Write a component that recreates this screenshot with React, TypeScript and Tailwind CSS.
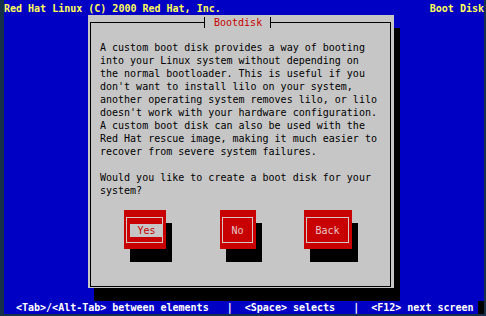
import React from "react";

const lines = [
  "A custom boot disk provides a way of booting",
  "into your Linux system without depending on",
  "the normal bootloader. This is useful if you",
  "don't want to install lilo on your system,",
  "another operating system removes lilo, or lilo",
  "doesn't work with your hardware configuration.",
  "A custom boot disk can also be used with the",
  "Red Hat rescue image, making it much easier to",
  "recover from severe system failures.",
  "",
  "Would you like to create a boot disk for your",
  "system?",
];

const Button = ({
  label,
  className,
  focused,
}: {
  label: string;
  className: string;
  focused?: boolean;
}) => {
  return (
    <div
      className={`h-[39px] bg-[#c80000] shadow-[6px_13px_0_0_#000] pt-[7px] pr-[3px] pb-[6px] pl-[2px] ${className}`}
    >
      <div className="h-full border border-[#d6c6c6] flex items-center justify-center">
        {focused ? (
          <div className="h-[13px] w-full ml-[3px] -mr-px bg-[#c6c6c6] text-[#c80000] text-center">
            {label}
          </div>
        ) : (
          <span className="text-[#e6c8c8]">{label}</span>
        )}
      </div>
    </div>
  );
};

const Dialog = () => {
  return (
    <div className="w-[306px] h-[273px] bg-[#c6c6c6] shadow-[6px_13px_0_0_#000] pt-[7px] pr-[3px] pb-[1px] pl-[2px]">
      <div className="relative h-full border border-black pl-[9px] pt-[18px]">
        <div className="absolute -top-[7px] left-[113px] h-[13px] flex items-center bg-[#c6c6c6]">
          <span className="w-px h-[11px] bg-black" />
          <span className="pl-[9px] pr-[8px] text-[#c80000]">Bootdisk</span>
          <span className="w-px h-[11px] bg-black" />
        </div>
        <div className="text-black whitespace-pre">
          {lines.map((l, i) => (
            <div key={i} className="h-[13px]">
              {l}
            </div>
          ))}
        </div>
        <div className="flex mt-[13px] pl-[24px]">
          <Button label="Yes" className="w-[42px]" focused />
          <Button label="No" className="w-[36px] ml-[54px]" />
          <Button label="Back" className="w-[48px] ml-[48px]" />
        </div>
      </div>
    </div>
  );
};

export default function App() {
  return (
    <div className="w-[486px] h-[316px] bg-[#17304a] pl-[4px] pr-[2px] pb-[2px] overflow-hidden">
      <div className="h-full bg-[#0000c4] flex flex-col pt-[2px] text-[10px] leading-[13px] font-['DejaVu_Sans_Mono','Liberation_Mono',monospace]">
        <div className="h-[13px] flex justify-between font-bold text-[#ffff5a] whitespace-pre">
          <span>Red Hat Linux (C) 2000 Red Hat, Inc.</span>
          <span>Boot Disk</span>
        </div>
        <div className="h-[286px] pl-[84px]">
          <Dialog />
        </div>
        <div className="h-[13px] flex font-bold text-white whitespace-pre">
          <span className="pl-[12px]">
            {"<Tab>/<Alt-Tab> between elements   |  <Space> selects   |  <F12> next screen"}
          </span>
          <span className="ml-auto w-[6px] h-[13px] bg-black" />
        </div>
      </div>
    </div>
  );
}
